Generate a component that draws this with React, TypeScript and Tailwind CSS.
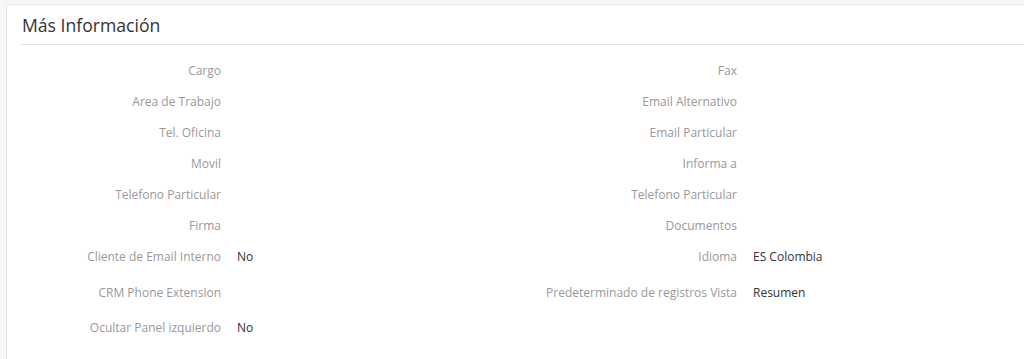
import React from 'react';

type Field = { label: string; value?: string };

const rows: { left: Field; right: Field; extra?: string }[] = [
  { left: { label: 'Cargo' }, right: { label: 'Fax' } },
  { left: { label: 'Area de Trabajo' }, right: { label: 'Email Alternativo' } },
  { left: { label: 'Tel. Oficina' }, right: { label: 'Email Particular' } },
  { left: { label: 'Movil' }, right: { label: 'Informa a' } },
  { left: { label: 'Telefono Particular' }, right: { label: 'Telefono Particular' } },
  { left: { label: 'Firma' }, right: { label: 'Documentos' } },
  { left: { label: 'Cliente de Email Interno', value: 'No' }, right: { label: 'Idioma', value: 'ES Colombia' } },
  { left: { label: 'CRM Phone Extension' }, right: { label: 'Predeterminado de registros Vista', value: 'Resumen' }, extra: 'pt-[5px]' },
  { left: { label: 'Ocultar Panel izquierdo', value: 'No' }, right: { label: '' }, extra: 'pt-[4px]' },
];

const Cell = ({ field }: { field: Field }) => (
  <div className="flex w-[516px] items-center">
    <div className="w-[200px] shrink-0 text-right text-[#999]">{field.label}</div>
    <div className="pl-4 text-[#333]">{field.value}</div>
  </div>
);

export default function App() {
  return (
    <div
      className="h-[359px] w-[1024px] overflow-hidden bg-[#f7f7f7] pl-[6px] pt-[4px]"
      style={{ fontFamily: '"Open Sans", sans-serif' }}
    >
      <div className="h-[400px] w-[1100px] border-l border-t border-[#e6e6e6] bg-white pl-[14px]">
        <div className="flex h-[40px] items-center border-b border-[#e3e3e3] pt-[1px]">
          <h2 className="ml-px text-[17.6px] text-[#333]">Más Información</h2>
        </div>
        <div className="pt-[10px] text-[12px]">
          {rows.map((r, i) => (
            <div key={i} className={`${r.extra ?? ''}`}>
              <div className="flex h-[31px] items-center">
                <Cell field={r.left} />
                <Cell field={r.right} />
              </div>
            </div>
          ))}
        </div>
      </div>
    </div>
  );
}
